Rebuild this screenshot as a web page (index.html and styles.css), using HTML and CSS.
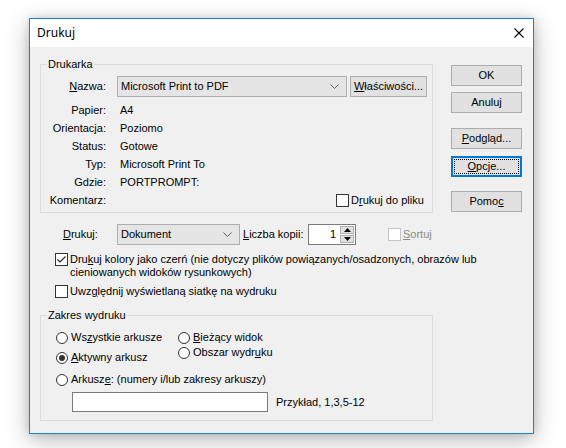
FILE: index.html
```html
<!DOCTYPE html>
<html lang="pl">
<head>
<meta charset="utf-8">
<title>Drukuj</title>
<link rel="stylesheet" href="styles.css">
</head>
<body>
<div class="dialog">
  <div class="titlebar">
    <span class="title">Drukuj</span>
    <svg class="close" width="10" height="10" viewBox="0 0 10 10"><path d="M0.5 0.5 L9.5 9.5 M9.5 0.5 L0.5 9.5" stroke="#000" stroke-width="1.1" fill="none"/></svg>
  </div>
  <div class="client">
    <div class="main">
      <fieldset class="group">
        <legend>Drukarka</legend>
        <div class="name-row">
          <span class="lbl"><u>N</u>azwa:</span>
          <div class="combo printer-combo">
            <span class="combo-text">Microsoft Print to PDF</span>
            <svg class="chev" width="9" height="5" viewBox="0 0 9 5"><polyline points="0.5,0.5 4.5,4.5 8.5,0.5" fill="none" stroke="#606060" stroke-width="1"/></svg>
          </div>
          <button class="btn props"><u>W</u>łaściwości...</button>
        </div>
        <div class="info">
          <span class="lbl">Papier:</span><span class="val">A4</span>
          <span class="lbl">Orientacja:</span><span class="val">Poziomo</span>
          <span class="lbl">Status:</span><span class="val">Gotowe</span>
          <span class="lbl">Typ:</span><span class="val">Microsoft Print To</span>
          <span class="lbl">Gdzie:</span><span class="val">PORTPROMPT:</span>
          <span class="lbl">Komentarz:</span>
          <span class="val"><span class="check to-file"><span class="box"></span><span>D<u>r</u>ukuj do pliku</span></span></span>
        </div>
      </fieldset>

      <div class="print-row">
        <span class="print-lbl"><u>D</u>rukuj:</span>
        <div class="combo doc-combo">
          <span class="combo-text">Dokument</span>
          <svg class="chev" width="9" height="5" viewBox="0 0 9 5"><polyline points="0.5,0.5 4.5,4.5 8.5,0.5" fill="none" stroke="#606060" stroke-width="1"/></svg>
        </div>
        <span class="copies-lbl"><u>L</u>iczba kopii:</span>
        <div class="spinner">
          <span class="spin-val">1</span>
          <div class="spin-btns">
            <span class="spin-btn"><svg width="7" height="4" viewBox="0 0 7 4"><polygon points="3.5,0 7,4 0,4" fill="#000"/></svg></span>
            <span class="spin-btn"><svg width="7" height="4" viewBox="0 0 7 4"><polygon points="0,0 7,0 3.5,4" fill="#000"/></svg></span>
          </div>
        </div>
        <span class="check sort disabled"><span class="box"></span><span><u>S</u>ortuj</span></span>
      </div>

      <div class="check opt opt-color">
        <span class="box checked"><svg width="11" height="11" viewBox="0 0 11 11"><polyline points="1.5,5.5 4,8 9.5,2.5" fill="none" stroke="#222" stroke-width="1.1"/></svg></span>
        <span class="opt-text">Dru<u>k</u>uj kolory jako czerń (nie dotyczy plików powiązanych/osadzonych, obrazów lub<br>cieniowanych widoków rysunkowych)</span>
      </div>
      <div class="check opt opt-grid">
        <span class="box"></span>
        <span>Uwz<u>g</u>lędnij wyświetlaną siatkę na wydruku</span>
      </div>

      <fieldset class="group range">
        <legend>Zakres wydruku</legend>
        <div class="range-body">
          <div class="radio-cols">
            <div class="col-a">
              <span class="radio-item"><span class="radio"></span><span>Ws<u>z</u>ystkie arkusze</span></span>
              <span class="radio-item active-item"><span class="radio on"></span><span><u>A</u>ktywny arkusz</span></span>
            </div>
            <div class="col-b">
              <span class="radio-item"><span class="radio"></span><span><u>B</u>ieżący widok</span></span>
              <span class="radio-item area-item"><span class="radio"></span><span>Obszar wydr<u>u</u>ku</span></span>
            </div>
          </div>
          <span class="radio-item sheets-item"><span class="radio"></span><span>Arkusz<u>e</u>: (numery i/lub zakresy arkuszy)</span></span>
          <div class="sheets-row">
            <span class="textbox"></span>
            <span class="example">Przykład, 1,3,5-12</span>
          </div>
        </div>
      </fieldset>
    </div>

    <div class="side">
      <button class="btn">OK</button>
      <button class="btn cancel">Anuluj</button>
      <button class="btn preview"><u>P</u>odgląd...</button>
      <button class="btn options focused"><u>O</u>pcje...</button>
      <button class="btn help">Pomo<u>c</u></button>
    </div>
  </div>
</div>
</body>
</html>
```

FILE: styles.css
```css
* { box-sizing: border-box; }

html, body {
  margin: 0;
  height: 448px;
  overflow: hidden;
  background: #ffffff;
}

body {
  padding: 18px 0 0 29px;
  font: 11px/13px "Liberation Sans", Arial, sans-serif;
  color: #000;
}

u { text-decoration: underline; text-underline-offset: 1px; }

.dialog {
  width: 505px;
  height: 416px;
  border: 1px solid #1c7fd6;
  background: #f0f0f0;
  box-shadow: 0 6px 22px rgba(0, 0, 0, 0.28), 0 0 8px rgba(0, 0, 0, 0.12);
  display: flex;
  flex-direction: column;
}

.titlebar {
  height: 28px;
  flex: none;
  background: #fff;
  display: flex;
  align-items: center;
  justify-content: space-between;
  padding: 0 9px 0 7px;
  font: 12px/16px "Noto Sans", "Liberation Sans", sans-serif;
}

.close { display: block; }

.client {
  flex: 1;
  display: flex;
  padding: 11px 10px 0 10px;
}

.main { width: 393px; flex: none; }

.side {
  margin-left: 18px;
  width: 71px;
  padding-top: 7px;
  display: flex;
  flex-direction: column;
}

/* group boxes */
.group {
  margin: 0;
  padding: 0;
  border: 1px solid #dcdcdc;
  min-width: 0;
}

.group legend {
  margin-left: 6px;
  padding: 0 1px;
  line-height: 13px;
}

.lbl { text-align: right; white-space: nowrap; }

.name-row {
  display: flex;
  align-items: center;
  margin-top: 5px;
}

.name-row .lbl { width: 65px; margin-right: 11px; }

.combo {
  height: 21px;
  border: 1px solid #adadad;
  background: #e5e5e5;
  display: flex;
  align-items: center;
  justify-content: space-between;
  padding: 0 7px 0 3px;
  white-space: nowrap;
}

.printer-combo { width: 230px; }
.doc-combo { width: 123px; }

.chev { display: block; }

.btn {
  font: inherit;
  color: #000;
  height: 21px;
  padding: 0;
  border: 1px solid #adadad;
  background: #e1e1e1;
  text-align: center;
  white-space: nowrap;
}

.props { width: 77px; margin-left: 3px; }

.info {
  display: grid;
  grid-template-columns: 65px 1fr;
  column-gap: 14px;
  grid-auto-rows: 18px;
  align-items: center;
  margin-top: 4px;
  padding-bottom: 3px;
}

.val { white-space: nowrap; }

/* checkboxes */
.check {
  display: flex;
  align-items: center;
  white-space: nowrap;
}

.box {
  width: 13px;
  height: 13px;
  flex: none;
  border: 1px solid #333;
  background: #fff;
  margin-right: 2px;
  display: flex;
  align-items: center;
  justify-content: center;
}

.box svg { display: block; }

.to-file { margin-left: 216px; }

.disabled { color: #8a8a8a; }
.disabled .box { border-color: #c4c4c4; }

/* print row */
.print-row {
  display: flex;
  align-items: center;
  margin-top: 11px;
  height: 21px;
}

.print-lbl { margin-left: 23px; width: 54px; }

.copies-lbl { margin-left: 3px; width: 65px; white-space: nowrap; }

.spinner {
  width: 48px;
  height: 21px;
  border: 1px solid #7a7a7a;
  background: #fff;
  display: flex;
}

.spin-val {
  flex: 1;
  text-align: right;
  padding-right: 3px;
  line-height: 19px;
}

.spin-btns {
  width: 16px;
  display: flex;
  flex-direction: column;
  padding: 1px;
  gap: 1px;
}

.spin-btn {
  flex: 1;
  background: #e1e1e1;
  border: 1px solid #adadad;
  display: flex;
  align-items: center;
  justify-content: center;
}

.spin-btn svg { display: block; }

.sort { margin-left: 32px; }

/* options */
.opt { margin-left: 15px; align-items: flex-start; }
.opt-color { margin-top: 8px; }
.opt-grid { margin-top: 6px; }
.opt-text { white-space: nowrap; }

/* range */
.range { margin-top: 11px; }

.range-body {
  padding: 9px 0 8px 15px;
}

.radio-cols { display: flex; }

.col-a { width: 122px; display: flex; flex-direction: column; }
.col-b { display: flex; flex-direction: column; }

.radio-item {
  display: flex;
  align-items: center;
  white-space: nowrap;
  height: 13px;
}

.radio {
  width: 12px;
  height: 12px;
  flex: none;
  border: 1px solid #333;
  border-radius: 50%;
  background: #fff;
  margin-right: 3px;
  display: flex;
  align-items: center;
  justify-content: center;
}

.radio.on::before {
  content: "";
  width: 6px;
  height: 6px;
  border-radius: 50%;
  background: #333;
}

.active-item { margin-top: 7px; }
.area-item { margin-top: 2px; }
.sheets-item { margin-top: 9px; }

.sheets-row {
  display: flex;
  align-items: center;
  margin-top: 6px;
  margin-left: 16px;
}

.textbox {
  width: 196px;
  height: 20px;
  border: 1px solid #7a7a7a;
  background: #fff;
}

.example { margin-left: 8px; white-space: nowrap; }

/* side buttons */
.side .btn { width: 71px; }
.cancel { margin-top: 6px; }
.preview { margin-top: 15px; }
.options { margin-top: 7px; }
.help { margin-top: 14px; }

.focused {
  border: 1px solid #0078d7;
  box-shadow: inset 0 0 0 1px #0078d7;
  outline: 1px dotted #000;
  outline-offset: -4px;
}
```
